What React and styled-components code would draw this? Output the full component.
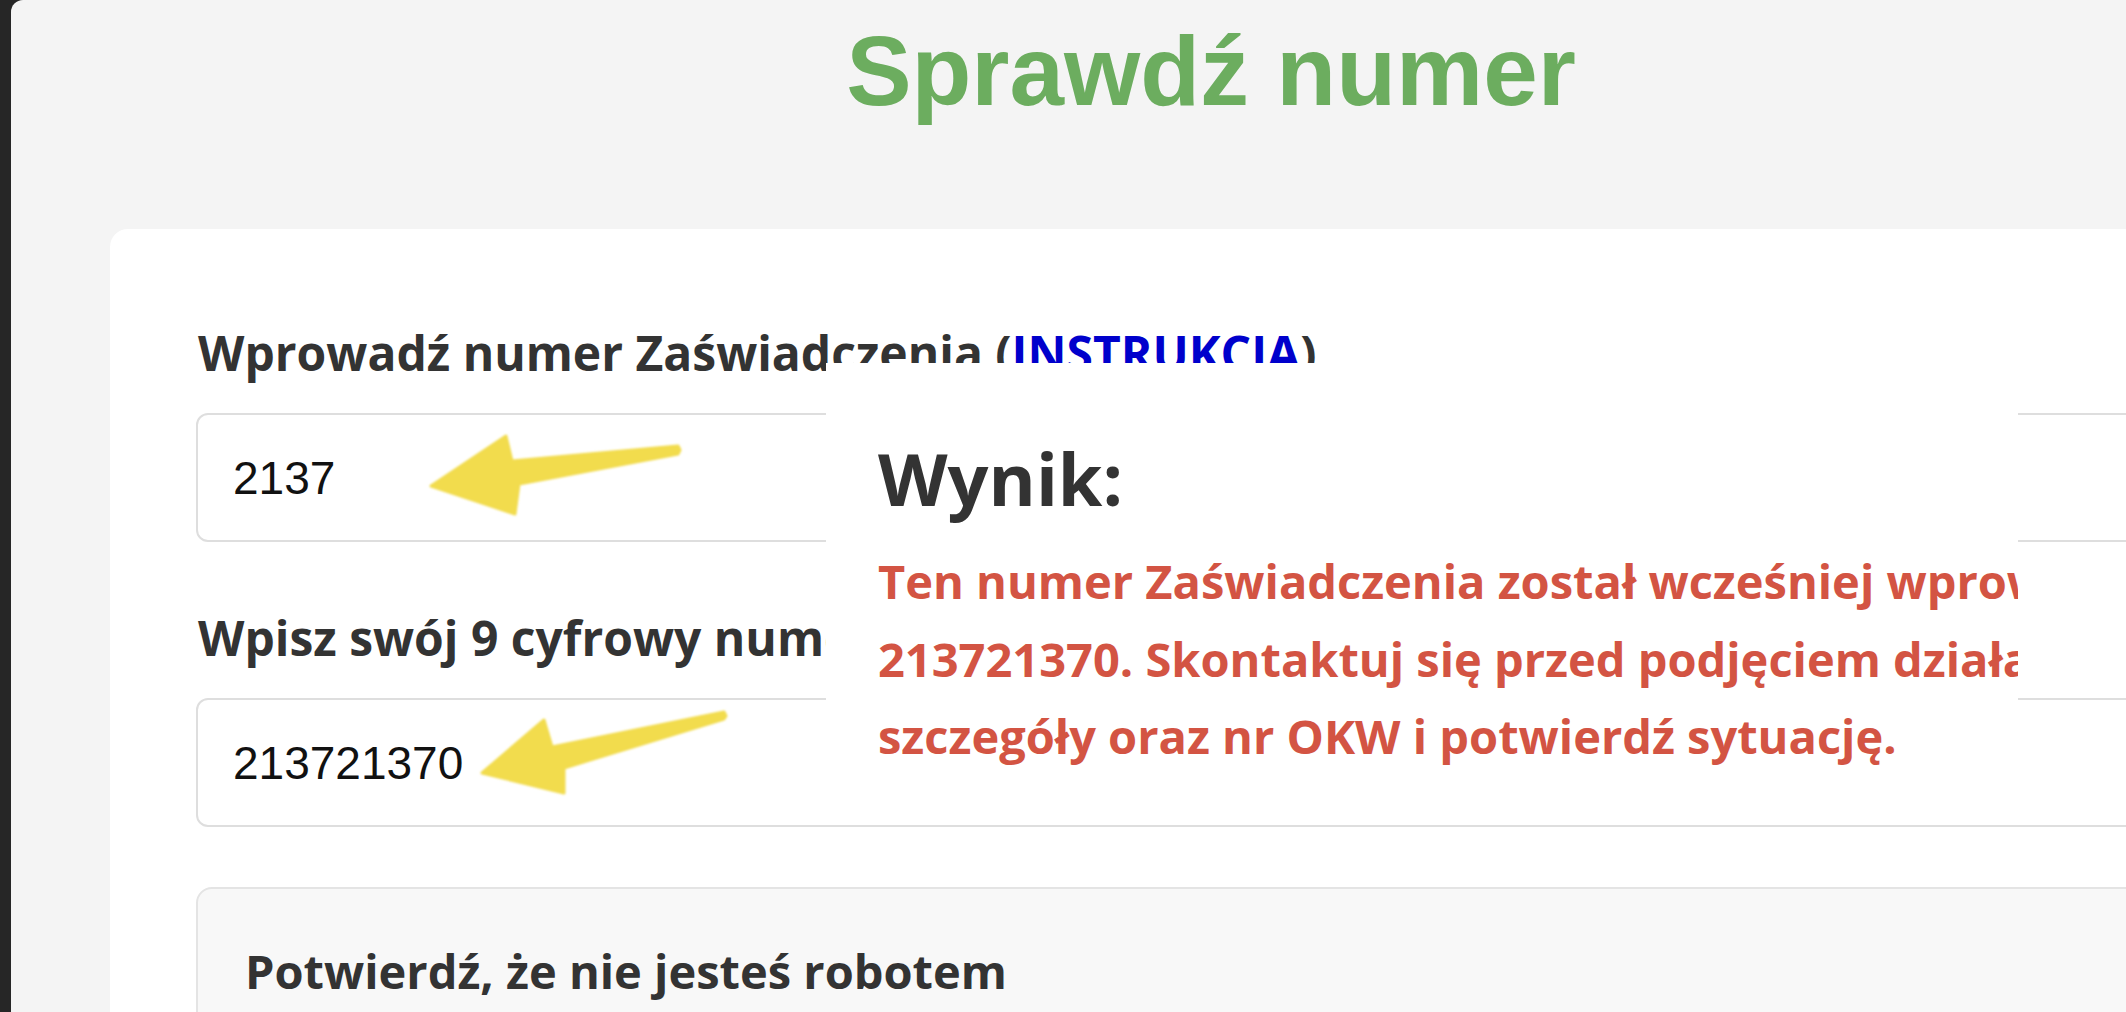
import React from "react";
import styled, { createGlobalStyle } from "styled-components";

const GlobalStyle = createGlobalStyle`
  html, body {
    margin: 0;
    padding: 0;
    overflow: hidden;
    background: #262626;
  }
  * {
    box-sizing: border-box;
  }
`;

const Page = styled.div`
  margin-left: 11px;
  width: 2400px;
  min-height: 1012px;
  background: #f4f4f4;
  border-top-left-radius: 12px;
  padding-top: 15px;
  font-family: "Open Sans", "Liberation Sans", sans-serif;
`;

const Title = styled.h1`
  margin: 0;
  text-align: center;
  font-family: "Liberation Sans", Arial, sans-serif;
  font-weight: 700;
  font-size: 98px;
  line-height: 112px;
  color: #6cad5f;
`;

const Card = styled.div`
  position: relative;
  margin: 102px 99px 0;
  background: #ffffff;
  border-radius: 18px;
  padding: 91px 86px 60px;
`;

const Field = styled.div`
  position: relative;
  margin-bottom: ${({ gap }) => gap}px;
`;

const Label = styled.label`
  display: block;
  padding-left: 2px;
  margin-bottom: 28px;
  font-weight: 700;
  font-size: 48px;
  color: #333333;
`;

const Link = styled.a`
  color: #0000cc;
  text-decoration: none;
`;

const InputBox = styled.div`
  position: relative;
  height: 129px;
  border: 2px solid #dedede;
  border-radius: 12px;
  background: #ffffff;
  display: flex;
  align-items: center;
  padding-left: 35px;
  font-family: "Liberation Sans", Arial, sans-serif;
  font-size: 46px;
  color: #111111;
`;

const Arrow = styled.svg`
  position: absolute;
  left: 0;
  top: 0;
  overflow: visible;
  pointer-events: none;
`;

const Captcha = styled.div`
  border: 2px solid #e4e4e4;
  border-radius: 16px;
  background: #f8f8f8;
  padding: 50px 47px 60px;
  font-weight: 700;
  font-size: 47px;
  color: #333333;
`;

const Result = styled.div`
  position: absolute;
  left: 716px;
  top: 134px;
  width: 1192px;
  height: 440px;
  background: #ffffff;
  overflow: hidden;
  padding: 70px 0 0 52px;
`;

const ResultTitle = styled.div`
  font-weight: 700;
  font-size: 72px;
  line-height: 90px;
  color: #333333;
  margin-bottom: 20px;
`;

const ResultText = styled.div`
  font-weight: 700;
  font-size: 47px;
  line-height: 77.5px;
  color: #d35443;
  white-space: nowrap;
`;

const YellowArrow = ({ points }) => (
  <Arrow width="10" height="10">
    <defs>
      <filter id="soft" x="-10%" y="-10%" width="120%" height="120%">
        <feGaussianBlur stdDeviation="0.9" />
      </filter>
    </defs>
    <polygon
      points={points}
      fill="#f2dc4e"
      stroke="#f2dc4e"
      strokeWidth="3"
      strokeLinejoin="round"
      filter="url(#soft)"
    />
  </Arrow>
);

export default function App() {
  return (
    <>
      <GlobalStyle />
      <Page>
        <Title>Sprawdź numer</Title>
        <Card>
          <Field gap={63}>
            <Label>
              Wprowadź numer Zaświadczenia (<Link href="#">INSTRUKCJA</Link>)
            </Label>
            <InputBox>
              2137
              <YellowArrow points="233,71 308,21 314,46 480,31 482,35 480,39 321,69 317,99" />
            </InputBox>
          </Field>
          <Field gap={60}>
            <Label>Wpisz swój 9 cyfrowy numer telefonu</Label>
            <InputBox>
              213721370
              <YellowArrow points="284,73 346,20 354,47 526,12 528,16 526,19 366,68 366,93" />
            </InputBox>
          </Field>
          <Captcha>Potwierdź, że nie jesteś robotem</Captcha>
          <Result>
            <ResultTitle>Wynik:</ResultTitle>
            <ResultText>
              Ten numer Zaświadczenia został wcześniej wprowadzony dla numeru
              <br />
              213721370. Skontaktuj się przed podjęciem działań z koordynatorem, podaj
              <br />
              szczegóły oraz nr OKW i potwierdź sytuację.
            </ResultText>
          </Result>
        </Card>
      </Page>
    </>
  );
}
